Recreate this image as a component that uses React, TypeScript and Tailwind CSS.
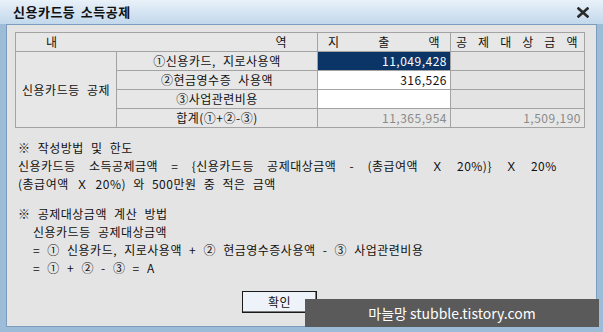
const font = {
  fontFamily: '"Noto Sans CJK KR", "Noto Sans", sans-serif',
  wordSpacing: "4px",
};

function Cell({
  children,
  className = "",
  colSpan,
  rowSpan,
}: {
  children?: React.ReactNode;
  className?: string;
  colSpan?: number;
  rowSpan?: number;
}) {
  return (
    <td
      colSpan={colSpan}
      rowSpan={rowSpan}
      className={`h-[19px] border border-[#a3a3a3] p-0 leading-none ${className}`}
    >
      {children}
    </td>
  );
}

export default function App() {
  return (
    <div
      className="relative flex h-[332px] w-[603px] flex-col overflow-hidden bg-[#9dbcd8] text-[12px] tracking-[0.5px] text-[#111]"
      style={font}
    >
      {/* title bar */}
      <div className="flex h-[24px] items-center justify-between bg-gradient-to-b from-[#e9f1f9] to-[#c2d8ec] pl-[13px] pr-[14px]">
        <span className="text-[13px] font-bold tracking-[0.5px] text-[#111]" style={{ wordSpacing: "2px" }}>
          신용카드등 소득공제
        </span>
        <svg width="12" height="11" viewBox="0 0 12 11">
          <path d="M1.5 1.5 L10.5 9.5 M10.5 1.5 L1.5 9.5" stroke="#2a2a2a" strokeWidth="2.6" strokeLinecap="square" />
        </svg>
      </div>

      {/* body */}
      <div className="mx-[6px] mb-[5px] flex flex-1 flex-col border border-[#7b9dbd] bg-[#e5e4e4] pl-[8px] pt-[7px]">
        <table className="w-[569px] table-fixed border-collapse border border-[#8c8c8c] bg-[#e7e7e7]">
          <colgroup>
            <col className="w-[101px]" />
            <col className="w-[201px]" />
            <col className="w-[133px]" />
            <col className="w-[134px]" />
          </colgroup>
          <tbody>
            <tr>
              <Cell colSpan={2} className="pl-[30px] pr-[30px]">
                <div className="flex justify-between">
                  <span>내</span>
                  <span>역</span>
                </div>
              </Cell>
              <Cell className="px-[10px]">
                <div className="flex justify-between">
                  <span>지</span>
                  <span>출</span>
                  <span>액</span>
                </div>
              </Cell>
              <Cell className="pl-[5px] pr-[6px]">
                <div className="flex justify-between">
                  <span>공</span>
                  <span>제</span>
                  <span>대</span>
                  <span>상</span>
                  <span>금</span>
                  <span>액</span>
                </div>
              </Cell>
            </tr>
            <tr>
              <Cell rowSpan={4} className="text-center">
                신용카드등 공제
              </Cell>
              <Cell className="text-center">①신용카드, 지로사용액</Cell>
              <Cell className="bg-[#0b3566] pr-[3px] text-right text-white">11,049,428</Cell>
              <Cell className="bg-[#e3e3e3]" />
            </tr>
            <tr>
              <Cell className="text-center">②현금영수증 사용액</Cell>
              <Cell className="bg-white pr-[3px] text-right">316,526</Cell>
              <Cell className="bg-[#e3e3e3]" />
            </tr>
            <tr>
              <Cell className="text-center">③사업관련비용</Cell>
              <Cell className="bg-white" />
              <Cell className="bg-[#e3e3e3]" />
            </tr>
            <tr>
              <Cell className="text-center">합계(①+②-③)</Cell>
              <Cell className="pr-[3px] text-right text-[#8a8a8a]">11,365,954</Cell>
              <Cell className="pr-[3px] text-right text-[#8a8a8a]">1,509,190</Cell>
            </tr>
          </tbody>
        </table>

        <div className="mt-[11px] whitespace-pre pl-[3px] leading-[18px]">
          <p>※ 작성방법 및 한도</p>
          <p style={{ wordSpacing: "10px" }}>
            신용카드등 소득공제금액 = {"{"}신용카드등 공제대상금액 - (총급여액 Ｘ 20%){"}"} Ｘ 20%
          </p>
          <p>(총급여액 Ｘ 20%) 와 500만원 중 적은 금액</p>
        </div>

        <div className="mt-[12px] whitespace-pre pl-[3px] leading-[18px]">
          <p>※ 공제대상금액 계산 방법</p>
          <p className="pl-[15px]">신용카드등 공제대상금액</p>
          <p className="pl-[15px]">= ① 신용카드, 지로사용액 + ② 현금영수증사용액 - ③ 사업관련비용</p>
          <p className="pl-[15px]">= ① + ② - ③ = A</p>
        </div>

        <div className="mt-[14px] pl-[227px]">
          <button
            type="button"
            className="h-[22px] w-[75px] border border-[#1a1a1a] bg-[#eef3f9] text-[12px] shadow-[inset_-1px_-1px_0_#7a7a7a]"
          >
            확인
          </button>
        </div>
      </div>

      {/* watermark */}
      <div
        className="absolute left-[305px] top-[299px] flex h-[28px] w-[294px] items-center justify-center bg-[#5a5a5a] text-[14px] tracking-normal text-white"
        style={{ wordSpacing: "0px" }}
      >
        마늘망 stubble.tistory.com
      </div>
    </div>
  );
}
